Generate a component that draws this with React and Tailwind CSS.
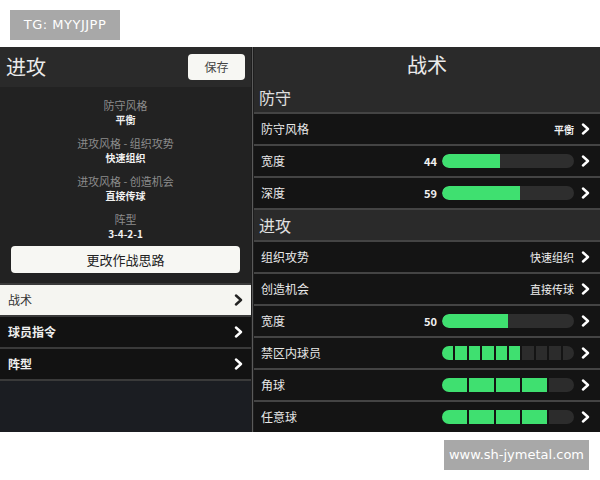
import React from "react";

const FONT = { fontFamily: '"Noto Sans CJK SC", "Noto Sans", sans-serif' };

function Chevron({ color = "#ffffff" }) {
  return (
    <svg width="9" height="12" viewBox="0 0 9 12" className="shrink-0">
      <polyline points="2,1.5 7,6 2,10.5" fill="none" stroke={color} strokeWidth="2.4" strokeLinecap="round" strokeLinejoin="round" />
    </svg>
  );
}

function Bar({ value }) {
  return (
    <div className="w-[132px] h-[14px] rounded-full bg-[#2e2e2e] overflow-hidden">
      <div className="h-full bg-[#3fe070] rounded-l-full" style={{ width: `${value}%` }} />
    </div>
  );
}

function SegBar({ total, on }) {
  return (
    <div className="w-[132px] h-[14px] rounded-full overflow-hidden flex gap-[2px]">
      {Array.from({ length: total }).map((_, i) => (
        <div key={i} className={"flex-1 h-full " + (i < on ? "bg-[#3fe070]" : "bg-[#2c2c2c]")} />
      ))}
    </div>
  );
}

function Row({ label, right }) {
  return (
    <div className="h-[32px] border-t-2 border-[#444444] bg-[#141414] flex items-center pl-[7px] pr-[10px]">
      <span className="text-[12px] text-[#e8e8e8] flex-1">{label}</span>
      <div className="flex items-center gap-[7px]">
        {right}
        <Chevron />
      </div>
    </div>
  );
}

function Section({ label }) {
  return (
    <div className="h-[32px] border-t-2 border-[#444444] bg-[#2a2a2a] flex items-center pl-[5px]">
      <span className="text-[16px] text-[#e0e0e0]">{label}</span>
    </div>
  );
}

function Info({ label, value }) {
  return (
    <div className="flex flex-col items-center">
      <span className="text-[11px] leading-[16px] text-[#8c8c8c]">{label}</span>
      <span className="text-[10px] leading-[14px] font-bold text-[#f0f0f0]">{value}</span>
    </div>
  );
}

function MenuRow({ label, active }) {
  return (
    <div className={"h-[32px] border-t-2 border-[#3a3a3a] flex items-center justify-between pl-[8px] pr-[8px] " + (active ? "bg-[#f5f5f1]" : "bg-[#121212]")}>
      <span className={"text-[12px] " + (active ? "text-[#333333]" : "text-[#f0f0f0] font-bold")}>{label}</span>
      <Chevron color={active ? "#222222" : "#ffffff"} />
    </div>
  );
}

export default function App() {
  return (
    <div className="w-[600px] h-[480px] bg-white flex flex-col" style={FONT}>
      <div className="pt-[10px] pl-[10px]">
        <div className="w-[110px] h-[30px] bg-[#a8a8a8] flex items-center justify-center text-white text-[13px] tracking-[0.5px]" style={{ fontFamily: '"DejaVu Sans", sans-serif' }}>
          TG: MYYJJPP
        </div>
      </div>
      <div className="mt-[7px] h-[385px] flex bg-[#2a2a2a]">
        {/* left panel */}
        <div className="w-[251px] flex flex-col">
          <div className="h-[40px] bg-[#2a2a2a] flex items-center justify-between pl-[6px] pr-[6px]">
            <span className="text-[20px] text-[#ebebeb]">进攻</span>
            <div className="w-[57px] h-[26px] rounded-[4px] bg-[#f7f7f3] flex items-center justify-center text-[12px] text-[#444444]">保存</div>
          </div>
          <div className="h-[196px] bg-[#222222] flex flex-col pt-[10px]">
            <div className="flex flex-col gap-[8px]">
              <Info label="防守风格" value="平衡" />
              <Info label="进攻风格 - 组织攻势" value="快速组织" />
              <Info label="进攻风格 - 创造机会" value="直接传球" />
              <Info label="阵型" value="3-4-2-1" />
            </div>
            <div className="mt-[5px] mx-[11px] h-[27px] rounded-[4px] bg-[#f7f7f3] flex items-center justify-center text-[13px] text-[#222222]">更改作战思路</div>
          </div>
          <MenuRow label="战术" active />
          <MenuRow label="球员指令" />
          <MenuRow label="阵型" />
          <div className="flex-1 border-t-2 border-[#3a3a3a] bg-[#1b1d22]" />
        </div>
        <div className="w-[3px] bg-[#1e1e1e] flex justify-center">
          <div className="w-[1px] h-full bg-[#5a5a5a]" />
        </div>
        {/* right panel */}
        <div className="flex-1 flex flex-col">
          <div className="h-[35px] flex items-center justify-center">
            <span className="text-[20px] text-[#ebebeb]">战术</span>
          </div>
          <div className="h-[30px] bg-[#2a2a2a] flex items-center pl-[5px]">
            <span className="text-[16px] text-[#e0e0e0]">防守</span>
          </div>
          <Row label="防守风格" right={<span className="text-[10px] font-bold text-[#f0f0f0]">平衡</span>} />
          <Row label="宽度" right={<><span className="text-[11px] font-bold text-[#f0f0f0] mr-[-2px]">44</span><Bar value={44} /></>} />
          <Row label="深度" right={<><span className="text-[11px] font-bold text-[#f0f0f0] mr-[-2px]">59</span><Bar value={59} /></>} />
          <Section label="进攻" />
          <Row label="组织攻势" right={<span className="text-[11px] text-[#f0f0f0]">快速组织</span>} />
          <Row label="创造机会" right={<span className="text-[11px] text-[#f0f0f0]">直接传球</span>} />
          <Row label="宽度" right={<><span className="text-[11px] font-bold text-[#f0f0f0] mr-[-2px]">50</span><Bar value={50} /></>} />
          <Row label="禁区内球员" right={<SegBar total={10} on={6} />} />
          <Row label="角球" right={<SegBar total={5} on={4} />} />
          <Row label="任意球" right={<SegBar total={5} on={4} />} />
        </div>
      </div>
      <div className="flex justify-end pr-[11px] mt-[8px]">
        <div className="w-[145px] h-[30px] bg-[#a8a8a8] flex items-center justify-center text-white text-[13px]" style={{ fontFamily: '"DejaVu Sans", sans-serif' }}>
          www.sh-jymetal.com
        </div>
      </div>
    </div>
  );
}
